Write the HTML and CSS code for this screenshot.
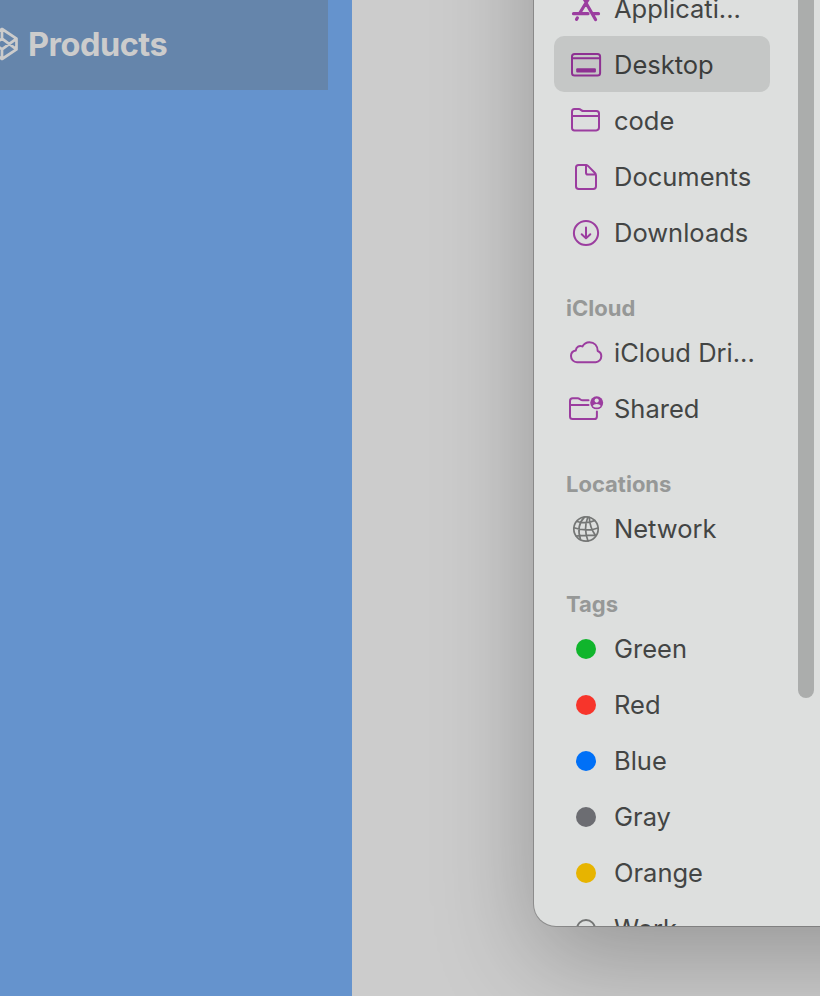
FILE: index.html
```html
<!DOCTYPE html>
<html lang="en">
<head>
<meta charset="utf-8">
<title>Products</title>
<link rel="stylesheet" href="styles.css">
</head>
<body>
<main class="screen">
  <section class="page">
    <header class="banner">
      <svg class="logo" width="34" height="34" viewBox="0 0 34 34"><path d="M17 2 31.500 11.600v10.800L17 32 2.500 22.400V11.600zM17 2v9.700l14.500 10.700M17 32v-9.700l14.500-10.700M17 11.700 2.500 22.400M17 22.300 2.500 11.600"/></svg>
      <h1 class="title">Products</h1>
    </header>
  </section>
  <aside class="window">
    <nav class="sidebar">
      <div class="row">
        <svg class="icon app-store" viewBox="0 0 36 36"><path d="M15.500 7 18 11M21 7l-9.500 15.500M5.500 22.700h14.500M25 22.700h5.500M18 12l9.500 16.500M9.300 27 8.600 28.300"/></svg>
        <span class="label">Applicati...</span>
      </div>
      <div class="row selected">
        <svg class="icon" viewBox="0 0 36 36"><rect x="4" y="6.900" width="28.100" height="21.700" rx="2.600"/><path d="M4 11.300h28"/><rect x="8.200" y="21.300" width="19.700" height="4.300" rx="1" class="solid"/></svg>
        <span class="label">Desktop</span>
      </div>
      <div class="row">
        <svg class="icon" viewBox="0 0 36 36"><path d="M4 25V8.800Q4 6.100 6.400 6.100h4.400c2.200 0 2.500 2 4.700 2h13Q31 8.100 31 10.600v14q0 2.800-2.800 2.800H6.500Q4 27.400 4 25zM4 13h27"/></svg>
        <span class="label">code</span>
      </div>
      <div class="row">
        <svg class="icon" viewBox="0 0 36 36"><path d="M8 27.500V8.500Q8 5.900 10.600 5.900h6.900q1.500 0 2.500 1l7 7.100q1 1 1 2.500v10.700q0 2.700-2.700 2.700H10.700Q8 29.900 8 27.500zM18 6v7.800q0 1.800 1.800 1.800h8"/></svg>
        <span class="label">Documents</span>
      </div>
      <div class="row">
        <svg class="icon" viewBox="0 0 36 36"><circle cx="18" cy="18" r="12.100"/><path d="M18 12.500v10.800M13.700 19.200l4.300 4.200 4.300-4.200"/></svg>
        <span class="label">Downloads</span>
      </div>

      <h2 class="heading">iCloud</h2>
      <div class="row">
        <svg class="icon" viewBox="0 0 36 36"><path d="M9 27.200a6.100 6.100 0 0 1-6-6.200c0-3 2-5 4.800-5.500.2-3.800 3.500-5.300 6.600-4.100C16 8.700 18.500 7.200 21.400 7.200c5 0 8.200 3.600 8.300 8.800 2 .7 3.600 2.500 3.600 5.200 0 3.300-2.500 6-5.600 6z"/></svg>
        <span class="label">iCloud Dri...</span>
      </div>
      <div class="row">
        <svg class="icon" viewBox="0 0 36 36"><path d="M20.500 9.300h-5.800c-2.500 0-2.800-2-5-2H4.600Q2 7.300 2 9.900V25.500q0 2.600 2.600 2.600h21.600q2.700 0 2.700-2.700v-5M2 13.900h18.500"/><circle cx="28.700" cy="11.800" r="6.500" class="solid"/><circle cx="28.700" cy="9.600" r="2.100" class="cut"/><path d="M24.700 15.100c1-2.800 7-2.800 8 0-2 2-6 2-8 0z" class="cut"/></svg>
        <span class="label">Shared</span>
      </div>

      <h2 class="heading">Locations</h2>
      <div class="row">
        <svg class="icon globe" viewBox="0 0 36 36"><circle cx="18" cy="18" r="12.200"/><path d="M16.500 6.200C10.500 12 9.800 20 12.500 28.500M19.800 6.200C17 13 17 22 20 30M21.300 6.300c.2 8 2 12.500 6.300 18.200M9 10.500c6 1.800 12 1.700 17.800-1M6 16.800c7 2.600 17 3 24 .2M8.200 25c6-.8 13-.3 19.200-.8"/></svg>
        <span class="label">Network</span>
      </div>

      <h2 class="heading">Tags</h2>
      <div class="row"><span class="tag green"></span><span class="label">Green</span></div>
      <div class="row"><span class="tag red"></span><span class="label">Red</span></div>
      <div class="row"><span class="tag blue"></span><span class="label">Blue</span></div>
      <div class="row"><span class="tag gray"></span><span class="label">Gray</span></div>
      <div class="row"><span class="tag orange"></span><span class="label">Orange</span></div>
      <div class="row"><span class="tag empty"></span><span class="label">Work</span></div>
    </nav>
    <div class="scrollbar"><div class="thumb"></div></div>
  </aside>
</main>
</body>
</html>
```
FILE: styles.css
```css
* { box-sizing: border-box; }
body { margin: 0; font-family: Inter, "Liberation Sans", sans-serif; }
.screen {
  position: relative;
  width: 820px;
  height: 996px;
  overflow: hidden;
  background: #ccc;
}
.page { width: 352px; height: 996px; background: #6593cd; }
.banner {
  display: flex;
  align-items: center;
  width: 328px;
  height: 90px;
  background: #6585ab;
}
.logo {
  flex: none;
  margin: -2px 9px 0 -15px;
  fill: none;
  stroke: #ccc;
  stroke-width: 2.7;
  stroke-linejoin: round;
}
.title {
  margin: 0;
  color: #ccc;
  font-size: 32.500px;
  line-height: 40px;
  font-weight: 750;
  letter-spacing: -0.500px;
}
/* The window runs past the top and right edges of the screen. */
.window {
  position: absolute;
  left: 534px;
  top: -219px;
  display: flex;
  width: 600px;
  height: 1145px;
  padding-top: 200px;
  overflow: hidden;
  border-radius: 0 0 0 22px;
  background: #dddfde;
  box-shadow: 0 0 0 1px rgba(0, 0, 0, .22), 0 32px 100px rgba(0, 0, 0, .27);
}
.sidebar { flex: none; width: 264px; padding: 0 28px 0 20px; }
.row {
  display: flex;
  align-items: center;
  height: 56px;
  padding: 2px 0 0 14px;
  border-radius: 10px;
}
.row:first-child { height: 55px; padding-top: 0; }
.selected { background: #c5c7c6; }
.icon {
  flex: none;
  width: 36px;
  height: 36px;
  margin-right: 10px;
  fill: none;
  stroke: #9b3d9f;
  stroke-width: 2;
  stroke-linecap: round;
  stroke-linejoin: round;
}
.app-store { stroke-width: 3.2; }
.selected .icon { stroke: #8e3192; }
.icon .solid { fill: #9b3d9f; stroke: none; }
.selected .icon .solid { fill: #8e3192; }
.icon .cut { fill: #dddfde; stroke: none; }
.globe { stroke: #747675; stroke-width: 1.7; }
.label {
  color: #434544;
  font-size: 25.500px;
  line-height: 32px;
  font-weight: 430;
  white-space: nowrap;
}
.selected .label { color: #3b3d3c; }
.heading {
  margin: 34px 0 2px 12px;
  color: #969897;
  font-size: 22px;
  line-height: 28px;
  font-weight: 650;
}
.tag {
  flex: none;
  width: 20px;
  height: 20px;
  margin: 0 18px 0 8px;
  border-radius: 50%;
}
.green { background: #10b52c; }
.red { background: #f7352b; }
.blue { background: #0070f7; }
.gray { background: #6c6d72; }
.orange { background: #e7b400; }
.empty { border: 2px solid #747675; }
.scrollbar { width: 16px; }
.thumb { height: 717px; background: #abadac; border-radius: 8px; }
```
